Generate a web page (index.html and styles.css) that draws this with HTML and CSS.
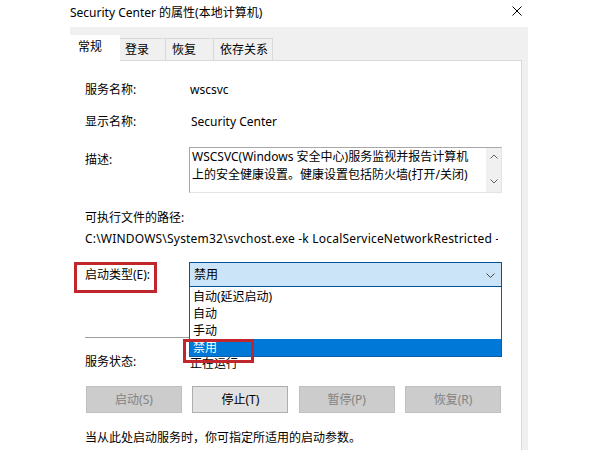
FILE: index.html
```html
<!DOCTYPE html>
<html lang="zh-CN">
<head>
<meta charset="utf-8">
<title>Security Center 的属性(本地计算机)</title>
<link rel="stylesheet" href="styles.css">
</head>
<body>
<div class="titlebar">
  <span class="title">Security Center 的属性(本地计算机)</span>
  <svg class="close" width="10" height="10" viewBox="0 0 10 10"><path d="M0.5 0.5 L9.5 9.5 M9.5 0.5 L0.5 9.5" stroke="#000" stroke-width="1" fill="none"/></svg>
</div>
<div class="dialog">
  <div class="tabs">
    <div class="tab active t1">常规</div>
    <div class="tab t2">登录</div>
    <div class="tab t3">恢复</div>
    <div class="tab t4">依存关系</div>
  </div>
  <div class="panel">
    <div class="row r1"><span class="lbl">服务名称:</span><span class="val">wscsvc</span></div>
    <div class="row r2"><span class="lbl">显示名称:</span><span class="val v2">Security Center</span></div>
    <div class="desc-row">
      <span class="lbl lbl-desc">描述:</span>
      <div class="textbox">
        <div class="tb-text">WSCSVC(Windows 安全中心)服务监视并报告计算机<br>上的安全健康设置。健康设置包括防火墙(打开/关闭)</div>
        <div class="scrollbar">
          <svg width="8" height="5" viewBox="0 0 8 5"><path d="M0.5 4.5 L4 1 L7.5 4.5" stroke="#606060" fill="none"/></svg>
          <svg width="8" height="5" viewBox="0 0 8 5"><path d="M0.5 0.5 L4 4 L7.5 0.5" stroke="#606060" fill="none"/></svg>
        </div>
      </div>
    </div>
    <div class="row r-pathlbl">可执行文件的路径:</div>
    <div class="row r-path"><span class="path">C:\WINDOWS\System32\svchost.exe -k LocalServiceNetworkRestricted -p</span></div>
    <div class="row r-start">
      <span class="lbl">启动类型(E):</span>
      <div class="combo">
        <span class="combo-text">禁用</span>
        <svg class="chev" width="9" height="5" viewBox="0 0 9 5"><path d="M0.5 0.5 L4.5 4.5 L8.5 0.5" stroke="#444" fill="none"/></svg>
        <div class="list">
          <div class="item">自动(延迟启动)</div>
          <div class="item">自动</div>
          <div class="item">手动</div>
          <div class="item sel">禁用</div>
        </div>
      </div>
    </div>
    <div class="sep"></div>
    <div class="row r-status"><span class="lbl">服务状态:</span><span class="val status">正在运行</span></div>
    <div class="buttons">
      <div class="btn disabled">启动(S)</div>
      <div class="btn">停止(T)</div>
      <div class="btn disabled">暂停(P)</div>
      <div class="btn disabled">恢复(R)</div>
    </div>
    <div class="row r-note">当从此处启动服务时，你可指定所适用的启动参数。</div>
  </div>
</div>
<div class="mark mark1"></div>
<div class="mark mark2"></div>
</body>
</html>
```
FILE: styles.css
```css
html, body {
  margin: 0;
  padding: 0;
}
body {
  width: 600px;
  height: 450px;
  overflow: hidden;
  background: #fff;
  color: #000;
  font-family: "Noto Sans", "Noto Sans CJK SC", sans-serif;
  font-size: 12px;
  line-height: 16px;
  position: relative;
}
.titlebar {
  height: 27px;
  box-sizing: border-box;
  padding: 5px 78px 0 70px;
  display: flex;
  justify-content: space-between;
  align-items: flex-start;
}
.title {
  line-height: 16px;
  white-space: nowrap;
}
.close {
  margin-top: 1px;
}
.dialog {
  margin-left: 70px;
  width: 458px;
  height: 423px;
  background: #f0f0f0;
  padding-top: 8px;
  box-sizing: border-box;
}
.tabs {
  display: flex;
  align-items: flex-end;
  height: 25px;
}
.tab {
  box-sizing: border-box;
  height: 22px;
  line-height: 21px;
  border: 1px solid #d9d9d9;
  border-bottom: none;
  margin-left: -1px;
  padding-left: 5px;
  white-space: nowrap;
}
.tab.active {
  height: 26px;
  margin-bottom: -1px;
  margin-left: 0;
  background: #fff;
  border-color: #fff;
  padding-left: 7px;
  line-height: 22px;
  position: relative;
  z-index: 1;
}
.t1 { width: 50px; }
.t2 { width: 47px; }
.t3 { width: 49px; padding-left: 6px; }
.t4 { width: 60px; padding-left: 6px; }
.panel {
  background: #fff;
  border-top: 1px solid #d9d9d9;
  border-right: 1px solid #d9d9d9;
  width: 452px;
  height: 390px;
  box-sizing: border-box;
  padding-left: 15px;
}
.row {
  display: flex;
  align-items: center;
  height: 16px;
  line-height: 16px;
  white-space: nowrap;
}
.lbl {
  width: 104px;
  flex: none;
}
.val { padding-left: 1px; }
.v2 { padding-left: 2px; }
.r1 { margin-top: 21px; }
.r2 { margin-top: 16px; }
.desc-row {
  margin-top: 17px;
  display: flex;
  align-items: flex-start;
  height: 46px;
}
.lbl-desc {
  padding-top: 5px;
  line-height: 16px;
}
.textbox {
  width: 313px;
  height: 46px;
  box-sizing: border-box;
  border: 1px solid #a8a8a8;
  border-right-color: #e3e3e3;
  border-bottom-color: #e3e3e3;
  display: flex;
}
.tb-text {
  flex: 1;
  padding: 0 2px 0 2px;
  line-height: 18px;
  white-space: nowrap;
  overflow: hidden;
}
.scrollbar {
  width: 15px;
  flex: none;
  background: #f0f0f0;
  display: flex;
  flex-direction: column;
  justify-content: space-between;
  align-items: center;
  padding: 6px 0 8px;
  box-sizing: border-box;
}
.r-pathlbl { margin-top: 17px; }
.r-path { margin-top: 5px; }
.path {
  display: block;
  width: 413px;
  overflow: hidden;
  white-space: nowrap;
  letter-spacing: 0.2px;
}
.r-start {
  margin-top: 15px;
  height: 25px;
}
.combo {
  position: relative;
  width: 313px;
  height: 25px;
  box-sizing: border-box;
  background: #cce4f7;
  border: 1px solid #005499;
  display: flex;
  align-items: center;
  justify-content: space-between;
  padding: 0 6px 0 4px;
}
.chev { margin-top: 1px; }
.list {
  position: absolute;
  left: -1px;
  top: 24px;
  width: 313px;
  box-sizing: border-box;
  background: #fff;
  border: 1px solid #0a5fa8;
  border-top: none;
  padding-top: 1px;
  z-index: 2;
}
.item {
  height: 17px;
  line-height: 17px;
  padding-left: 3px;
  white-space: nowrap;
}
.item.sel {
  background: #0078d7;
  color: #fff;
}
.sep {
  margin-top: 50px;
  width: 417px;
  height: 1px;
  background: #a0a0a0;
}
.r-status { margin-top: 16px; }
.status { padding-top: 4px; }
.buttons {
  margin-top: 16px;
  margin-left: 1px;
  width: 415px;
  height: 27px;
  display: flex;
  justify-content: space-between;
}
.btn {
  width: 96px;
  height: 27px;
  box-sizing: border-box;
  border: 1px solid #adadad;
  background: #e1e1e1;
  display: flex;
  align-items: center;
  justify-content: center;
}
.btn.disabled {
  background: #cccccc;
  border-color: #bfbfbf;
  color: #838383;
}
.r-note { margin-top: 17px; }
.mark {
  position: absolute;
  box-sizing: border-box;
  border: 3px solid #c0262c;
  z-index: 5;
}
.mark1 {
  left: 74px;
  top: 262px;
  width: 83px;
  height: 31px;
}
.mark2 {
  left: 183px;
  top: 339px;
  width: 71px;
  height: 24px;
}
```
